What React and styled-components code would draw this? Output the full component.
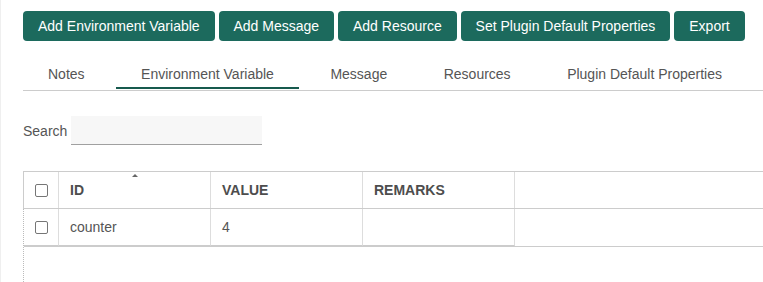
import React from "react";
import styled, { createGlobalStyle } from "styled-components";

const actions = [
  "Add Environment Variable",
  "Add Message",
  "Add Resource",
  "Set Plugin Default Properties",
  "Export",
];

const tabs = [
  "Notes",
  "Environment Variable",
  "Message",
  "Resources",
  "Plugin Default Properties",
];

const columns = [
  { key: "id", label: "ID", sorted: true },
  { key: "value", label: "VALUE" },
  { key: "remarks", label: "REMARKS" },
];

const rows = [{ id: "counter", value: "4", remarks: "" }];

const App = () => {
  return (
    <>
      <GlobalStyle />
      <Page>
        <Toolbar>
          {actions.map((a) => (
            <ActionButton key={a}>{a}</ActionButton>
          ))}
        </Toolbar>

        <TabList>
          {tabs.map((t) => (
            <Tab key={t} active={t === "Environment Variable"}>
              {t}
            </Tab>
          ))}
        </TabList>

        <SearchRow>
          <Label>Search</Label>
          <SearchInput />
        </SearchRow>

        <Table>
          <HeaderRow>
            <CheckCell>
              <Check type="checkbox" />
            </CheckCell>
            {columns.map((c) => (
              <HeadCell key={c.key}>
                {c.sorted && <SortArrow />}
                {c.label}
              </HeadCell>
            ))}
            <Filler />
          </HeaderRow>
          <Body>
            {rows.map((r) => (
              <Row key={r.id}>
                <BodyCheckCell>
                  <Check type="checkbox" />
                </BodyCheckCell>
                {columns.map((c) => (
                  <Cell key={c.key}>{r[c.key]}</Cell>
                ))}
              </Row>
            ))}
          </Body>
        </Table>
      </Page>
    </>
  );
};

export default App;

const GlobalStyle = createGlobalStyle`
  html, body {
    margin: 0;
    padding: 0;
    background: #fff;
    font-family: "Liberation Sans", Arial, sans-serif;
  }
  * {
    box-sizing: border-box;
  }
`;

const Page = styled.div`
  height: 282px;
  overflow: hidden;
  border-left: 1px solid #efefef;
  padding: 11px 0 0 22px;
  display: flex;
  flex-direction: column;
`;

const Toolbar = styled.div`
  display: flex;
  gap: 3.9px;
`;

const ActionButton = styled.button`
  height: 30px;
  padding: 0 15px;
  border: none;
  border-radius: 4px;
  background: #1c6a5d;
  color: #fff;
  font-family: inherit;
  font-size: 14px;
  white-space: nowrap;
  cursor: pointer;
`;

const TabList = styled.div`
  display: flex;
  gap: 6.5px;
  margin-top: 20px;
  padding-bottom: 1px;
  border-bottom: 1px solid #cccccc;
`;

const Tab = styled.div`
  height: 28px;
  padding: 0 25px;
  display: flex;
  align-items: center;
  font-size: 14px;
  color: #555;
  white-space: nowrap;
  border-bottom: 2px solid ${(p) => (p.active ? "#175a4e" : "transparent")};
`;

const SearchRow = styled.div`
  display: flex;
  align-items: center;
  gap: 4px;
  margin-top: 25px;
`;

const Label = styled.span`
  font-size: 14px;
  color: #555;
`;

const SearchInput = styled.input`
  width: 191px;
  height: 29px;
  border: none;
  border-bottom: 1px solid #a0a0a0;
  background: #f7f7f7;
  outline: none;
`;

const Table = styled.div`
  margin-top: 26px;
  flex: 1;
  display: flex;
  flex-direction: column;
  border-top: 1px solid #cccccc;
`;

const HeaderRow = styled.div`
  display: flex;
  height: 37px;
  flex: none;
  border-left: 1px solid #cccccc;
  border-bottom: 1px solid #cccccc;
`;

const CheckCell = styled.div`
  width: 35px;
  flex: none;
  display: flex;
  align-items: center;
  justify-content: center;
  border-right: 1px solid #dddddd;
`;

const BodyCheckCell = styled(CheckCell)`
  border-bottom: 1px solid #cccccc;
`;

const HeadCell = styled.div`
  position: relative;
  width: 152px;
  flex: none;
  display: flex;
  align-items: center;
  padding: 0 11px;
  font-size: 14px;
  font-weight: bold;
  color: #4d4d4d;
  border-right: 1px solid #dddddd;
`;

const SortArrow = styled.span`
  position: absolute;
  top: 2px;
  left: 50%;
  margin-left: -3px;
  border-left: 3px solid transparent;
  border-right: 3px solid transparent;
  border-bottom: 3px solid #666;
`;

const Filler = styled.div`
  flex: 1;
`;

const Body = styled.div`
  flex: 1;
  border-left: 1px dotted #bbbbbb;
`;

const Row = styled.div`
  display: flex;
  height: 38px;
  border-bottom: 1px solid #cccccc;
`;

const Cell = styled.div`
  width: 152px;
  flex: none;
  display: flex;
  align-items: center;
  padding: 0 11px;
  font-size: 14px;
  color: #555;
  border-right: 1px solid #dddddd;
  border-bottom: 1px solid #cccccc;
`;

const Check = styled.input`
  appearance: none;
  width: 13px;
  height: 13px;
  margin: 0;
  border: 1px solid #767676;
  border-radius: 2px;
  background: #fff;
`;
